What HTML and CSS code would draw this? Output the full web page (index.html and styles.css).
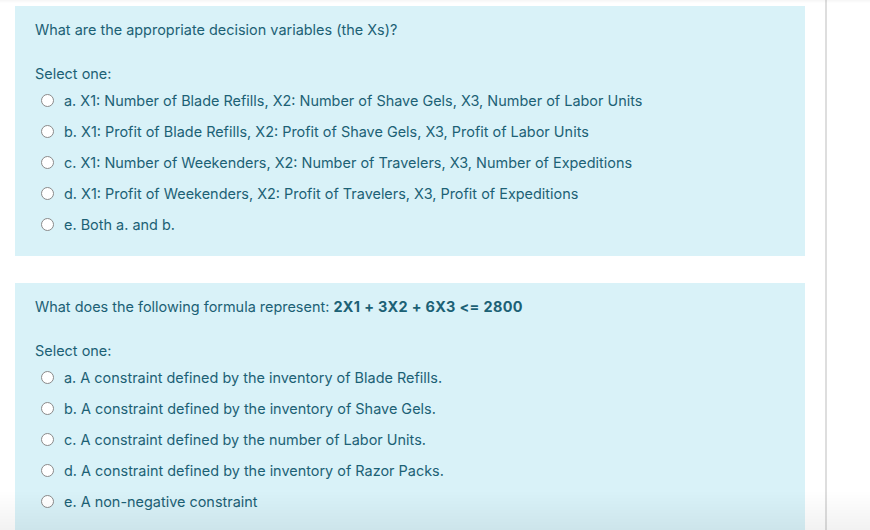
FILE: index.html
```html
<!DOCTYPE html>
<html>
<head>
<meta charset="utf-8">
<link rel="stylesheet" href="styles.css">
</head>
<body>
<div class="page">
  <div class="main">
    <div class="card card-first">
      <div class="qtext">What are the appropriate decision variables (the Xs)?</div>
      <div class="prompt">Select one:</div>
      <div class="answers">
        <label class="opt"><span class="radio"></span><span>a. X1: Number of Blade Refills, X2: Number of Shave Gels, X3, Number of Labor Units</span></label>
        <label class="opt"><span class="radio"></span><span>b. X1: Profit of Blade Refills, X2: Profit of Shave Gels, X3, Profit of Labor Units</span></label>
        <label class="opt"><span class="radio"></span><span>c. X1: Number of Weekenders, X2: Number of Travelers, X3, Number of Expeditions</span></label>
        <label class="opt"><span class="radio"></span><span>d. X1: Profit of Weekenders, X2: Profit of Travelers, X3, Profit of Expeditions</span></label>
        <label class="opt"><span class="radio"></span><span>e. Both a. and b.</span></label>
      </div>
    </div>
    <div class="card card-second">
      <div class="qtext">What does the following formula represent: <strong>2X1 + 3X2 + 6X3 &lt;= 2800</strong></div>
      <div class="prompt">Select one:</div>
      <div class="answers">
        <label class="opt"><span class="radio"></span><span>a. A constraint defined by the inventory of Blade Refills.</span></label>
        <label class="opt"><span class="radio"></span><span>b. A constraint defined by the inventory of Shave Gels.</span></label>
        <label class="opt"><span class="radio"></span><span>c. A constraint defined by the number of Labor Units.</span></label>
        <label class="opt"><span class="radio"></span><span>d. A constraint defined by the inventory of Razor Packs.</span></label>
        <label class="opt"><span class="radio"></span><span>e. A non-negative constraint</span></label>
      </div>
    </div>
  </div>
</div>
<div class="fade-top"></div>
<div class="fade-bottom"></div>
</body>
</html>
```
FILE: styles.css
```css
html, body {
  margin: 0;
  padding: 0;
  background: #ffffff;
  height: 100%;
  overflow: hidden;
}
body {
  font-family: "Inter", "Liberation Sans", sans-serif;
  font-size: 14.45px;
  color: #1c6175;
}
.page {
  display: flex;
}
.main {
  width: 790px;
  padding: 6px 20px 0 15px;
  border-right: 2px solid #dedede;
  display: flex;
  flex-direction: column;
  gap: 27px;
  min-height: 530px;
}
.card {
  background: #d9f2f8;
  padding: 14px 20px 16px 20px;
}
.card-first {
  height: 220px;
}
.qtext {
  line-height: 20px;
}
.qtext strong {
  font-weight: 700;
  letter-spacing: 0.35px;
}
.prompt {
  margin-top: 24px;
  line-height: 20px;
}
.answers {
  display: flex;
  flex-direction: column;
  margin-top: 1px;
}
.opt {
  display: flex;
  align-items: center;
  height: 31px;
  gap: 10px;
  padding-left: 6px;
}
.radio {
  width: 11px;
  height: 11px;
  border: 1.5px solid #8a8a8a;
  border-radius: 50%;
  background: #ffffff;
  flex: none;
}
.fade-top {
  position: fixed;
  left: 0;
  right: 0;
  top: 0;
  height: 3px;
  background: linear-gradient(rgba(0,0,0,0.04), rgba(0,0,0,0));
}
.fade-bottom {
  position: fixed;
  left: 0;
  right: 0;
  bottom: 0;
  height: 40px;
  background: linear-gradient(rgba(0,0,0,0), rgba(0,0,0,0.05));
  pointer-events: none;
}
```
